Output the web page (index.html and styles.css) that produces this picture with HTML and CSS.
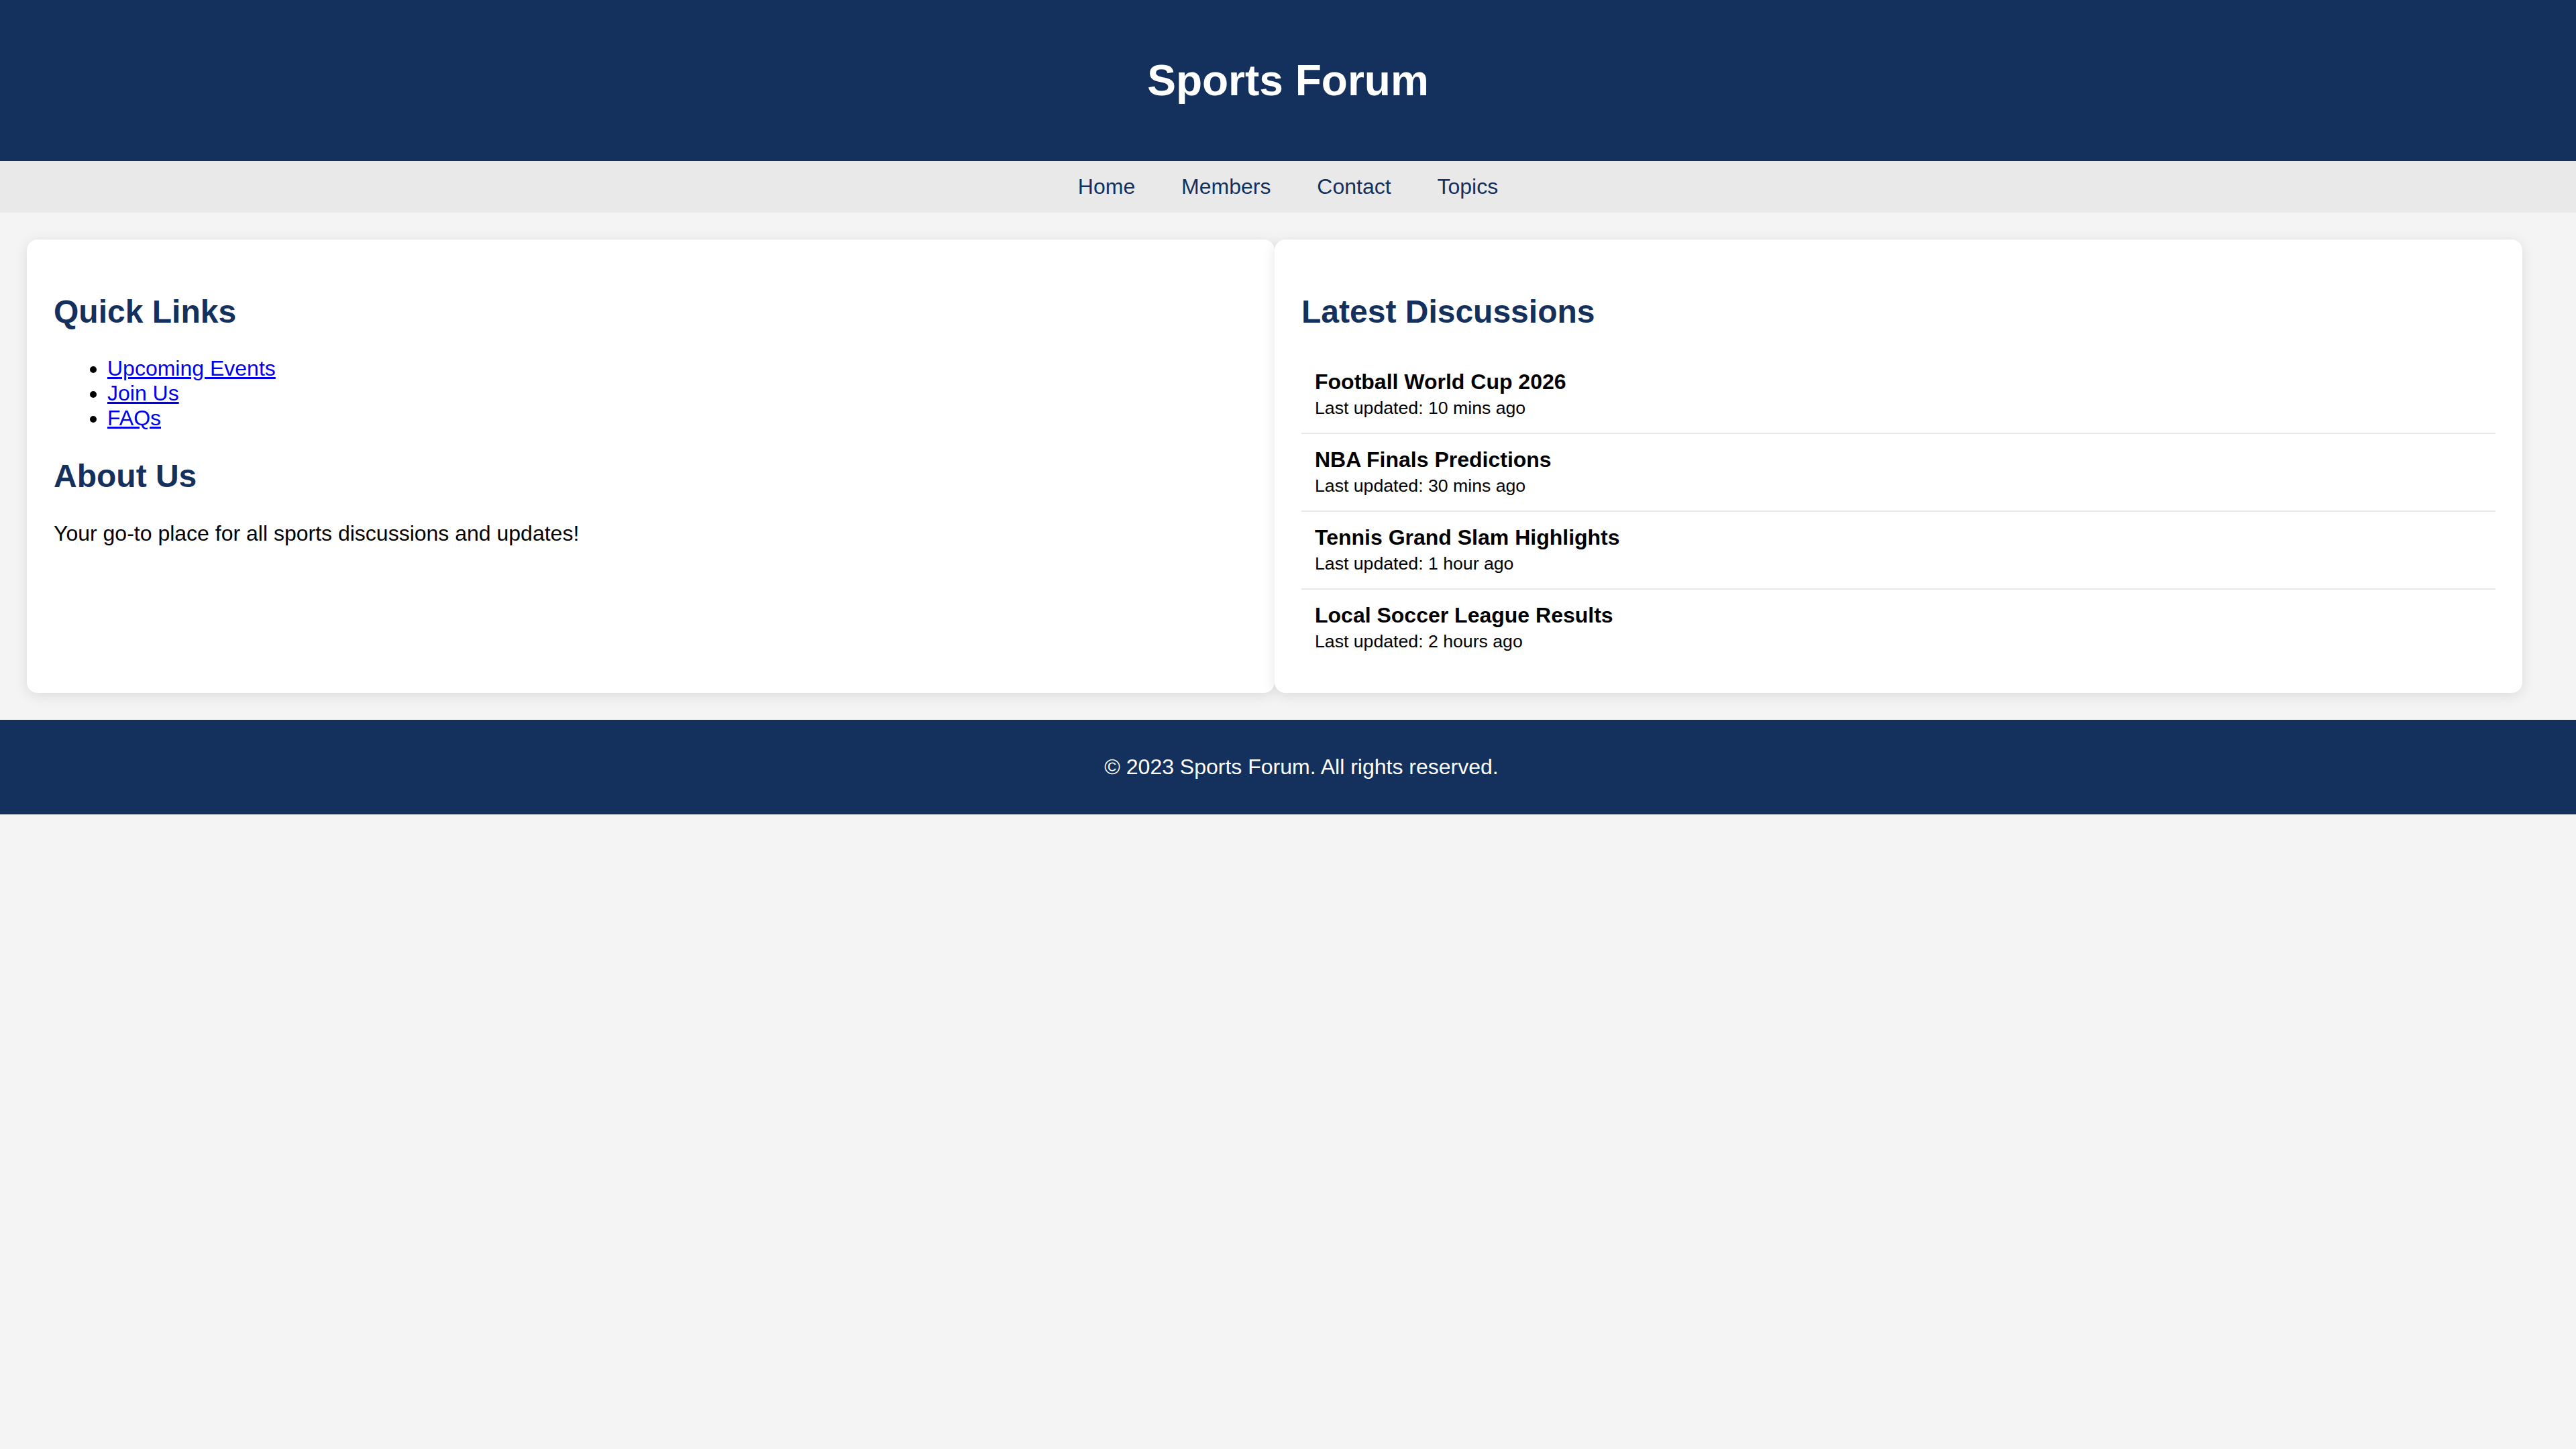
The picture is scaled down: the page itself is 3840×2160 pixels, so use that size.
FILE: index.html
```html
<!DOCTYPE html>
<html lang="en">
<head>
<meta charset="utf-8">
<title>Sports Forum</title>
<link rel="stylesheet" href="styles.css">
</head>
<body>
<header class="site-header">
  <h1>Sports Forum</h1>
</header>
<nav class="site-nav">
  <a href="#">Home</a>
  <a href="#">Members</a>
  <a href="#">Contact</a>
  <a href="#">Topics</a>
</nav>
<main class="content">
  <section class="card">
    <h2>Quick Links</h2>
    <ul class="links">
      <li><a href="#">Upcoming Events</a></li>
      <li><a href="#">Join Us</a></li>
      <li><a href="#">FAQs</a></li>
    </ul>
    <h2>About Us</h2>
    <p>Your go-to place for all sports discussions and updates!</p>
  </section>
  <section class="card">
    <h2>Latest Discussions</h2>
    <ul class="discussions">
      <li><strong>Football World Cup 2026</strong><br><small>Last updated: 10 mins ago</small></li>
      <li><strong>NBA Finals Predictions</strong><br><small>Last updated: 30 mins ago</small></li>
      <li><strong>Tennis Grand Slam Highlights</strong><br><small>Last updated: 1 hour ago</small></li>
      <li><strong>Local Soccer League Results</strong><br><small>Last updated: 2 hours ago</small></li>
    </ul>
  </section>
</main>
<footer class="site-footer">
  <p>&copy; 2023 Sports Forum. All rights reserved.</p>
</footer>
</body>
</html>
```

FILE: styles.css
```css
html, body {
  margin: 0;
  padding: 0;
}

body {
  background: #f4f4f4;
  color: #000;
  font-family: "Liberation Sans", Arial, Helvetica, sans-serif;
  font-size: 32px;
}

.site-header {
  background: #13315c;
  color: #fff;
  text-align: center;
  padding: 40px;
}

.site-header h1 {
  font-size: 64px;
  margin: 42.88px 0;
}

.site-nav {
  background: #e9e9e9;
  padding: 20px;
  text-align: center;
}

.site-nav a {
  color: #13315c;
  text-decoration: none;
  margin: 0 30px;
}

.content {
  display: flex;
  padding: 40px 80px 40px 40px;
}

.card {
  flex: 1 1 0;
  background: #fff;
  padding: 40px;
  border-radius: 16px;
  box-shadow: 0 4px 20px rgba(0, 0, 0, 0.1);
}

.card h2 {
  color: #13315c;
  font-size: 48px;
  margin: 39.84px 0;
}

.links {
  margin: 32px 0;
  padding-left: 80px;
}

.links a {
  color: #0000ee;
}

.card p {
  margin: 32px 0;
}

.discussions {
  list-style: none;
  margin: 0;
  padding: 0;
}

.discussions li {
  padding: 20px;
  border-bottom: 2px solid #e8e8e8;
}

.discussions li:last-child {
  border-bottom: none;
}

.discussions small {
  font-size: 26.67px;
}

.site-footer {
  background: #13315c;
  color: #fff;
  text-align: center;
  padding: 20px 0 20px 40px;
}

.site-footer p {
  margin: 32px 0;
}
```
